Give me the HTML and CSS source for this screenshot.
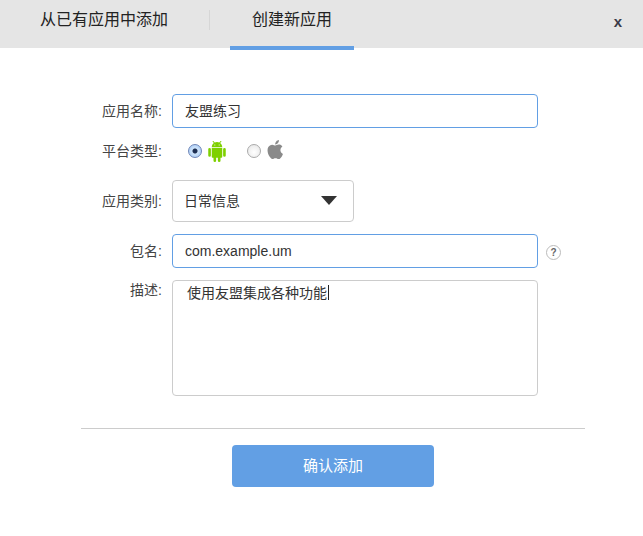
FILE: index.html
```html
<!DOCTYPE html>
<html lang="zh-CN">
<head>
    <meta charset="UTF-8">
    <meta name="viewport" content="width=device-width, initial-scale=1.0">
    <title>创建新应用</title>
    <link rel="stylesheet" href="styles.css">
</head>
<body>
    <div class="tabs">
        <a class="tab">从已有应用中添加</a>
        <span class="tab-divider"></span>
        <a class="tab tab-active">创建新应用</a>
        <span class="close">x</span>
    </div>

    <form class="app-form">
        <div class="form-group tight">
            <label>应用名称:</label>
            <input class="text-input focused cjk" type="text" value="友盟练习">
        </div>
        <div class="form-group">
            <label>平台类型:</label>
            <div class="platforms">
                <span class="radio checked"></span>
                <svg class="icon-android" viewBox="2 0 20 24"><path fill="#7ed000" d="M15,5H14V4H15M10,5H9V4H10M15.53,2.16L16.84,0.85C17.03,0.66 17.03,0.34 16.84,0.14C16.64,-0.05 16.32,-0.05 16.13,0.14L14.65,1.62C13.85,1.23 12.95,1 12,1C11.04,1 10.14,1.23 9.34,1.63L7.85,0.14C7.66,-0.05 7.34,-0.05 7.15,0.14C6.95,0.34 6.95,0.66 7.15,0.85L8.46,2.16C6.97,3.26 6,5 6,7H18C18,5 17,3.25 15.53,2.16M20.5,8A1.5,1.5 0 0,0 19,9.5V16.5A1.5,1.5 0 0,0 20.5,18A1.5,1.5 0 0,0 22,16.5V9.5A1.5,1.5 0 0,0 20.5,8M3.5,8A1.5,1.5 0 0,0 2,9.5V16.5A1.5,1.5 0 0,0 3.5,18A1.5,1.5 0 0,0 5,16.5V9.5A1.5,1.5 0 0,0 3.5,8M6,18A1,1 0 0,0 7,19H8V22.5A1.5,1.5 0 0,0 9.5,24A1.5,1.5 0 0,0 11,22.5V19H13V22.5A1.5,1.5 0 0,0 14.5,24A1.5,1.5 0 0,0 16,22.5V19H17A1,1 0 0,0 18,18V8H6V18Z"/></svg>
                <span class="radio second"></span>
                <svg class="icon-apple" viewBox="3.5 2 17.5 20"><path fill="#8a8a8a" d="M18.71 19.5c-.83 1.24-1.71 2.45-3.05 2.47-1.34.03-1.77-.79-3.29-.79-1.53 0-2 .77-3.27.82-1.31.05-2.3-1.32-3.14-2.53C4.25 17 2.94 12.45 4.7 9.39c.87-1.52 2.43-2.48 4.12-2.51 1.28-.02 2.5.87 3.29.87.78 0 2.26-1.07 3.81-.91.65.03 2.47.26 3.64 1.98-.09.06-2.17 1.28-2.15 3.81.03 3.02 2.65 4.03 2.68 4.04-.03.07-.42 1.44-1.38 2.83M13 3.5c.73-.83 1.94-1.46 2.94-1.5.13 1.17-.34 2.35-1.04 3.19-.69.85-1.83 1.51-2.95 1.42-.15-1.15.41-2.35 1.05-3.11z"/></svg>
            </div>
        </div>
        <div class="form-group">
            <label>应用类别:</label>
            <div class="select">日常信息<span class="arrow"></span></div>
        </div>
        <div class="form-group">
            <label>包名:</label>
            <input class="text-input focused" type="text" value="com.example.um">
            <span class="help">?</span>
        </div>
        <div class="form-group top">
            <label>描述:</label>
            <div class="textarea">使用友盟集成各种功能<span class="caret"></span></div>
        </div>
        <div class="form-footer">
            <button type="button">确认添加</button>
        </div>
    </form>
</body>
</html>
```

FILE: styles.css
```css
body { margin: 0; background: #fff; color: #333; font-family: "Liberation Sans", "Noto Sans CJK SC", sans-serif; font-size: 14px; }

.tabs { display: flex; align-items: flex-start; height: 48px; background: #e5e5e5; }
.tab { height: 40px; line-height: 40px; font-size: 16px; color: #222; }
.tabs .tab:first-child { padding: 0 41px 0 40px; }
.tab-divider { width: 1px; height: 20px; margin: 10px 20px 0 0; background: #d6d6d6; }
.tab-active { width: 124px; height: 46px; border-bottom: 4px solid #629fe4; text-align: center; }
.close { margin: 13px 21px 0 auto; font-size: 15px; font-weight: bold; line-height: 18px; color: #3a3a48; }

.app-form { display: flex; flex-direction: column; gap: 12px; width: 504px; margin: 46px 0 0 81px; }
.form-group { display: flex; align-items: center; }
.form-group.tight { margin-bottom: -6px; }
.form-group.top { align-items: flex-start; }
.form-group label { width: 81px; margin-right: 10px; line-height: 20px; text-align: right; color: #444; }

.text-input { box-sizing: border-box; width: 366px; height: 34px; padding: 0 12px; border: 1px solid #ccc; border-radius: 4px; font: inherit; color: #333; outline: none; }
.text-input.focused { border-color: #629fe4; }
.text-input.cjk { padding-bottom: 2px; }

.platforms { display: flex; align-items: center; height: 34px; padding-left: 16px; }
.radio { box-sizing: border-box; width: 14px; height: 14px; border: 1px solid #aaa; border-radius: 50%; background: radial-gradient(circle at 50% 60%, #fff, #e4e4e4); }
.radio.checked { border-color: #6f86b8; background: radial-gradient(circle, #1d2f52 0 2px, #cfe4fb 3px, #9cc4f2 100%); }
.radio.second { margin-left: 21px; }
.icon-android { width: 18px; height: 21px; margin-left: 6px; }
.icon-apple { width: 17px; height: 19px; margin: -3px 0 0 6px; }

.select { position: relative; box-sizing: border-box; width: 182px; height: 42px; padding-left: 11px; border: 1px solid #ccc; border-radius: 4px; line-height: 40px; color: #333; }
.arrow { position: absolute; top: 15px; right: 16px; border-width: 9px 8px 0; border-style: solid; border-color: #333 transparent transparent; }

.help { box-sizing: border-box; width: 15px; height: 15px; margin: 2px 0 0 8px; border: 1px solid #bbb; border-radius: 50%; font-size: 10px; font-weight: bold; line-height: 13px; text-align: center; color: #666; }

.textarea { box-sizing: border-box; width: 366px; height: 116px; padding: 2px 14px; border: 1px solid #ccc; border-radius: 4px; line-height: 20px; color: #333; }
.caret { display: inline-block; width: 1px; height: 15px; margin-left: 1px; vertical-align: -2px; background: #222; }

.form-footer { margin-top: 20px; padding-top: 16px; border-top: 1px solid #ccc; text-align: center; }
button { width: 202px; height: 42px; padding: 0 0 3px; border: none; border-radius: 4px; background: #629fe4; color: #fff; font: inherit; font-size: 15px; cursor: pointer; }
```
